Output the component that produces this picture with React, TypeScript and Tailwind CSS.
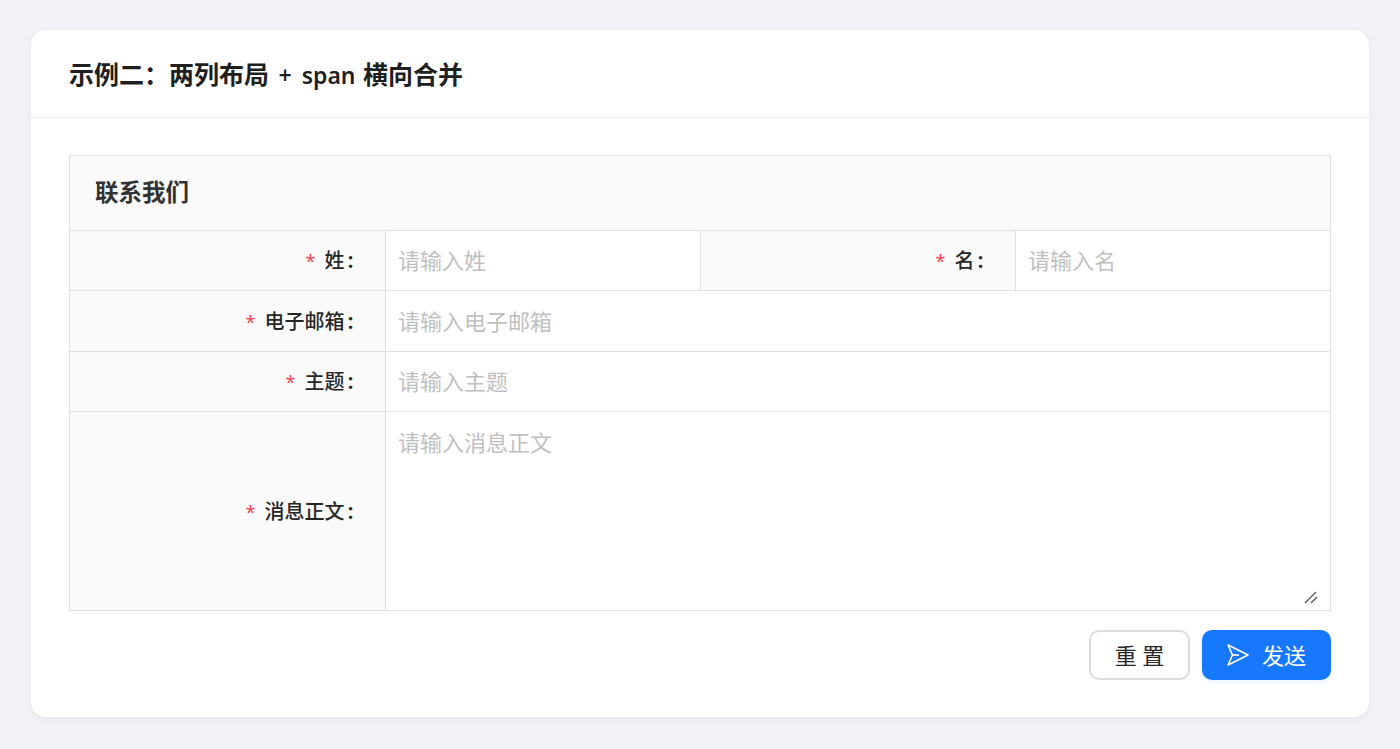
const FONT = "font-['Noto_Sans','Noto_Sans_CJK_SC',sans-serif]";

const Label = ({ text }: { text: string }) => (
  <th className="border border-[#e0e0e0] bg-[#fafafa] pt-[1px] pr-[31.5px] text-right align-middle text-[20px] font-medium text-[#262626]">
    <span className="mr-[9px] text-[18px] font-normal text-[#f5434f]">*</span>
    {text}
    <span className="ml-[3px] text-[22px] leading-none font-semibold">:</span>
  </th>
);

const Field = ({ placeholder, colSpan, h }: { placeholder: string; colSpan?: number; h: string }) => (
  <td colSpan={colSpan} className={`border border-[#e0e0e0] px-[12px] ${h}`}>
    <input
      placeholder={placeholder}
      className="w-full bg-transparent text-[22px] outline-none placeholder:text-[#bfbfbf]"
    />
  </td>
);

export default function App() {
  return (
    <div className={`min-h-[749px] bg-[#f0f2f5] px-[31px] py-[30px] ${FONT}`}>
      <div className="rounded-[15px] bg-white shadow-[0_2px_8px_rgba(0,0,0,0.05)]">
        <div className="flex h-[88px] items-center border-b border-[#ececec] px-[38px] pt-[2px]">
          <h1 className="text-[25px] font-semibold text-[#1f1f1f]">
            示例二{"\uFF1A"}两列布局 <span className="mr-[1px] ml-[3px] text-[23px] [word-spacing:4px]">+ span</span> 横向合并
          </h1>
        </div>
        <div className="px-[38px] pt-[37px] pb-[37px]">
          <table className="w-[1261px] table-fixed border-collapse">
            <colgroup>
              <col className="w-[316px]" />
              <col className="w-[315px]" />
              <col className="w-[315px]" />
              <col className="w-[315px]" />
            </colgroup>
            <thead>
              <tr>
                <th colSpan={4} className="h-[75px] border border-[#e0e0e0] bg-[#fafafa] pl-[25px] text-left text-[23.5px] font-semibold text-[#333333]">
                  联系我们
                </th>
              </tr>
            </thead>
            <tbody>
              <tr>
                <Label text="姓" />
                <Field placeholder="请输入姓" h="h-[60px]" />
                <Label text="名" />
                <Field placeholder="请输入名" h="h-[60px]" />
              </tr>
              <tr>
                <Label text="电子邮箱" />
                <Field placeholder="请输入电子邮箱" colSpan={3} h="h-[61px]" />
              </tr>
              <tr>
                <Label text="主题" />
                <Field placeholder="请输入主题" colSpan={3} h="h-[60px]" />
              </tr>
              <tr>
                <Label text="消息正文" />
                <td colSpan={3} className="h-[199px] border border-[#e0e0e0] p-0 align-top">
                  <div className="relative">
                    <textarea
                      placeholder="请输入消息正文"
                      className="block h-[198px] w-full resize-none px-[12px] py-[14px] text-[22px] leading-[32px] outline-none placeholder:text-[#bfbfbf]"
                    />
                    <svg width="14" height="13" viewBox="0 0 14 13" className="absolute right-[12px] bottom-[6px] text-[#555555]" fill="none" stroke="currentColor" strokeWidth="1.2">
                      <path d="M1 12 L12 1" />
                      <path d="M7 12 L13 6" />
                    </svg>
                  </div>
                </td>
              </tr>
            </tbody>
          </table>
          <div className="mt-[19px] flex justify-end gap-[12px]">
            <button className="h-[50px] w-[101px] rounded-[10px] border-2 border-[#dcdcdc] bg-white text-[22px] text-[#262626]">
              重 置
            </button>
            <button className="flex h-[50px] w-[129px] items-center justify-center gap-[13px] rounded-[10px] bg-[#1677ff] text-[22px] text-white shadow-[0_2px_4px_rgba(22,119,255,0.1)]">
              <svg width="22" height="22" viewBox="0 0 22 22" fill="none" stroke="currentColor" strokeWidth="1.6" strokeLinejoin="round">
                <path d="M1 1 L21 11 L1 21 L5.5 11 Z" />
                <path d="M5.5 11 L12 11" />
              </svg>
              发送
            </button>
          </div>
        </div>
      </div>
    </div>
  );
}
